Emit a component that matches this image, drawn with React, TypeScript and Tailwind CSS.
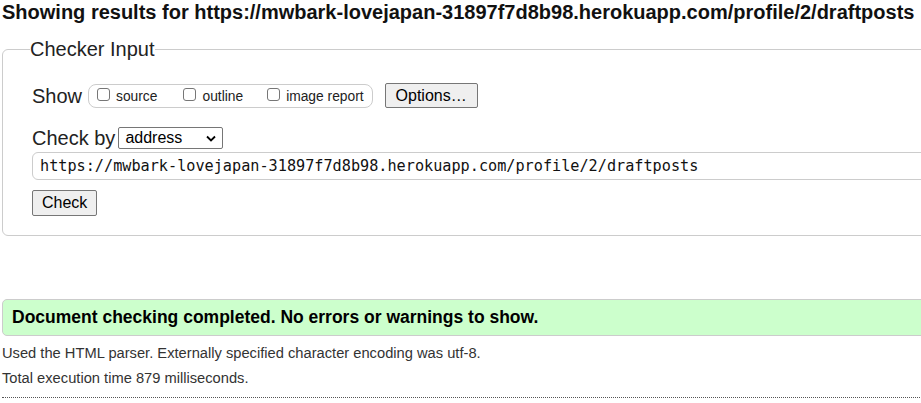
import React from "react";

const url = "https://mwbark-lovejapan-31897f7d8b98.herokuapp.com/profile/2/draftposts";

function Box({ label, className }: { label: string; className?: string }) {
  return (
    <label className={`flex items-center ${className ?? ""}`}>
      <span className="w-[13px] h-[13px] border border-[#767676] rounded-[3px] bg-white mt-[-3px]" />
      <span className="ml-[6px] mt-[3px] text-[13.8px] text-[#222]">{label}</span>
    </label>
  );
}

export default function App() {
  return (
    <div className="w-screen overflow-hidden bg-white font-['Liberation_Sans',Arial,sans-serif] text-[#222]">
      <div className="w-[1000px]">
        <h2 className="pt-px pl-[2px] text-[20px] leading-[23px] font-bold text-[#111] whitespace-nowrap">
          Showing results for {url}
        </h2>

        {/* Checker input */}
        <fieldset className="mt-[14px] ml-[2px] border border-[#cccccc] rounded-[6px] pl-[29px] pb-[19px]">
          <legend className="ml-[-2px] px-0 text-[20px] leading-[23px] text-[#222]">Checker Input</legend>

          <div className="flex items-center mt-[22px] h-[25px]">
            <span className="text-[20px]">Show</span>
            <div className="ml-[6px] flex items-center h-[24px] border border-[#cccccc] rounded-[8px] pl-[8px] pr-[8px]">
              <Box label="source" />
              <Box label="outline" className="ml-[26px]" />
              <Box label="image report" className="ml-[24px]" />
            </div>
            <button className="ml-[12px] h-[25px] px-[10px] bg-[#efefef] border border-[#767676] rounded-[2px] text-[16px] text-black">
              Options…
            </button>
          </div>

          <div className="flex items-center mt-[19px] h-[22px]">
            <span className="text-[20px]">Check by</span>
            <div className="ml-[3px] w-[105px] h-[22px] border border-[#767676] rounded-[2px] flex items-center justify-between pl-[6px] pr-[6px] text-[16px] text-black">
              <span>address</span>
              <svg width="10" height="7" viewBox="0 0 10 7">
                <path d="M1 1.5 L5 5.5 L9 1.5" fill="none" stroke="#000" strokeWidth="1.8" />
              </svg>
            </div>
          </div>

          <div className="mt-[3px] h-[28px] border border-[#cccccc] rounded-[6px] flex items-center pl-[7px] font-['DejaVu_Sans_Mono',monospace] text-[15.2px] text-[#111]">
            {url}
          </div>

          <button className="mt-[10px] h-[26px] px-[9px] bg-[#efefef] border border-[#767676] rounded-[2px] text-[16px] text-black">
            Check
          </button>
        </fieldset>

        {/* Result */}
        <div className="mt-[63px] ml-[2px] h-[37px] border border-[#cccccc] rounded-[5px] bg-[#ccffcc] flex items-center pl-[9px]">
          <span className="text-[17.5px] font-bold text-black">
            Document checking completed. No errors or warnings to show.
          </span>
        </div>

        <p className="mt-[9px] pl-[2px] text-[14.7px] leading-[17px] text-[#333]">
          Used the HTML parser. Externally specified character encoding was utf-8.
        </p>
        <p className="mt-[8px] pl-[2px] text-[14.7px] leading-[17px] text-[#333]">
          Total execution time 879 milliseconds.
        </p>
        <div className="mt-[10px] ml-[2px] border-b border-dotted border-[#555]" />
      </div>
    </div>
  );
}
